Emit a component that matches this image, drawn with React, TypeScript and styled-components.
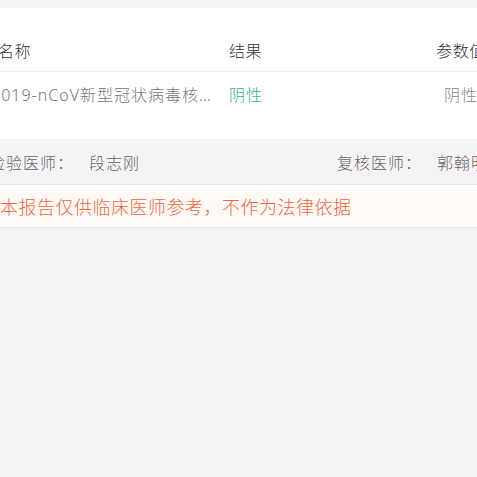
import styled, { createGlobalStyle } from 'styled-components'

const GlobalStyle = createGlobalStyle`
  body {
    margin: 0;
    background: #f6f3f6;
    overflow: hidden;
    font-family: 'Noto Sans', 'Noto Sans CJK SC', sans-serif;
    font-weight: 300;
  }
`

// the page is wider than the viewport and scrolled a little to the right
const Page = styled.div`
  width: 532px;
  margin-left: -20px;
  padding-top: 8px;
`

const Card = styled.section`
  background: #fff;
  padding: 21px 0 24px;
`

const Row = styled.div<{ head?: boolean }>`
  display: grid;
  grid-template-columns: 228px 1fr 80px;
  column-gap: 10px;
  align-items: center;
  padding: 0 11px;
  height: ${({ head }) => (head ? '42px' : '43px')};
  border-bottom: ${({ head }) => (head ? '1px solid #f1f0f1' : 'none')};
  font-size: 16px;
  letter-spacing: ${({ head }) => (head ? '0.5px' : '1px')};
  color: ${({ head }) => (head ? '#333' : '#777')};
`

const Cell = styled.div<{ tone?: 'ok' | 'muted'; center?: boolean; indent?: number }>`
  white-space: nowrap;
  overflow: hidden;
  text-overflow: ellipsis;
  text-align: ${({ center }) => (center ? 'center' : 'left')};
  padding-left: ${({ indent }) => indent || 0}px;
  color: ${({ tone }) => (tone === 'ok' ? '#33b67c' : tone === 'muted' ? '#888' : 'inherit')};
`

const Doctors = styled.div`
  display: flex;
  justify-content: space-between;
  align-items: center;
  height: 45px;
  padding: 0 24px 0 9px;
  font-size: 16px;
  letter-spacing: 1px;
  color: #666;
`

const Signer = styled.div`
  display: flex;
`

const SignLabel = styled.span`
  width: 100px;
`

const Notice = styled.div`
  background: #fffaf6;
  border-top: 1px solid #ebe6e6;
  border-bottom: 1px solid #ebe6e6;
  padding: 0 20px;
  height: 42px;
  display: flex;
  align-items: center;
  font-size: 18px;
  letter-spacing: 0.5px;
  color: #f1643b;
`

export default function App() {
  return (
    <Page>
      <GlobalStyle />
      <Card>
        <Row head>
          <Cell indent={7}>名称</Cell>
          <Cell>结果</Cell>
          <Cell center>参数值</Cell>
        </Row>
        <Row>
          <Cell>2019-nCoV新型冠状病毒核酸检测</Cell>
          <Cell tone="ok">阴性</Cell>
          <Cell tone="muted" center>阴性</Cell>
        </Row>
      </Card>
      <Doctors>
        <Signer>
          <SignLabel>检验医师：</SignLabel>
          <span>段志刚</span>
        </Signer>
        <Signer>
          <SignLabel>复核医师：</SignLabel>
          <span>郭翰明</span>
        </Signer>
      </Doctors>
      <Notice>本报告仅供临床医师参考，不作为法律依据</Notice>
    </Page>
  )
}
